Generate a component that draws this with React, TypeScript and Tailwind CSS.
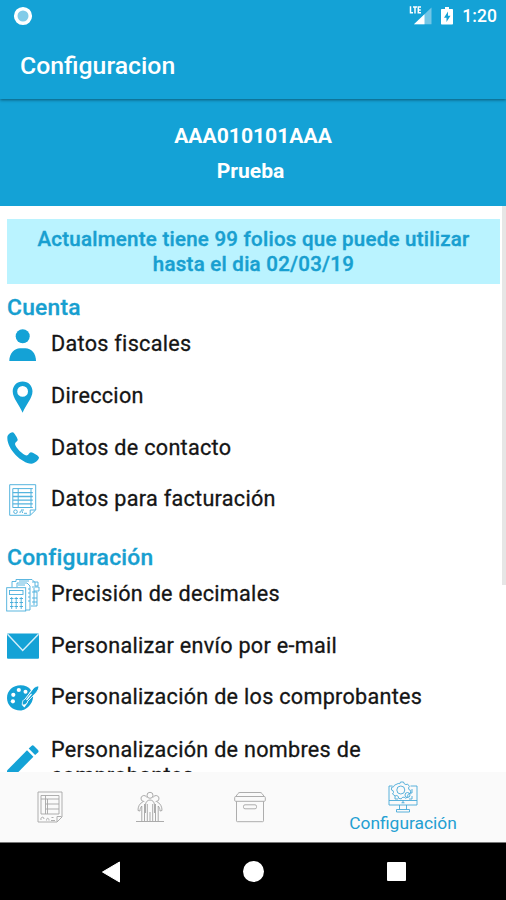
import type { ReactNode } from 'react';

const BLUE = '#14a2d6';

function UserIcon() {
  return (
    <svg viewBox="0 0 32 32" className="h-8 w-8" fill={BLUE}>
      <circle cx="15.7" cy="7.2" r="7" />
      <path d="M2.3 32C2.3 24 7.5 19.2 13 19.2h5.4c5.800 0 10.600 4.800 10.600 12.800z" />
    </svg>
  );
}

function PinIcon() {
  return (
    <svg viewBox="0 0 32 32" className="h-8 w-8" fill={BLUE}>
      <path
        fillRule="evenodd"
        d="M15.600 0.500C9.900 0.500 5.700 4.700 5.700 10.300c0 7 7 14 9.900 21.500 2.900-7.500 9.900-14.500 9.900-21.500 0-5.600-4.200-9.800-9.900-9.800zm0 4.500a5.400 5.400 0 1 1 0 10.800 5.400 5.400 0 0 1 0-10.800z"
      />
    </svg>
  );
}

function PhoneIcon() {
  return (
    <svg viewBox="0 0 32 32" className="h-8 w-8" fill={BLUE}>
      <path d="M0.500 4C1.500 1.800 4 0.300 6 0.200c1.400 0.500 4.600 6 4.700 7.600 0 1.800-2.700 2.400-2.700 4.200 0.500 3.500 8 11 11.500 11.500 2.100 0 2.700-3.200 4.500-3.200 1.600 0 7.600 3.400 8 5.100 0.200 2-4 6-7.700 6.300C14 31.500-1.500 15.500 0.500 4z" />
    </svg>
  );
}

function InvoiceIcon() {
  return (
    <svg viewBox="0 0 32 32" className="h-8 w-8" fill="none" stroke="#55b4de" strokeWidth="1">
      <path d="M2.700 0.700h26v25.300l-5.500 5.300H2.700z" />
      <path d="M23.200 31v-5h5.200M5.800 4.600h20M5.800 23.500h20M5.800 4.600v19M11.200 4.600v19M24 4.600v19" />
      <path d="M5.800 8.700h20M5.800 12.500h20M5.800 16.200h20M5.800 19.900h20" strokeWidth="1.300" />
      <circle cx="8.500" cy="27.700" r="1.800" />
      <path d="M13 29c0-3 2.500-3 2.500 0M17 29.300h3M14 26h3" />
    </svg>
  );
}

function InvoiceTabIcon() {
  return (
    <svg viewBox="0 0 26 32" className="h-8 w-[26px]" fill="none" stroke="#a6a6a6" strokeWidth="0.9">
      <path d="M1 1h24v25l-5 5H1z" />
      <path d="M20 30.500v-5h4.500M4 4.500h18V23H4zM8.500 4.500V23M10.500 8v15" />
      <path d="M4 8h18M8.500 13h13.500M8.500 18h13.500" />
      <path d="M4 29c-1-3 3-4 3-1M9.500 29.500c0-3 2.500-3 2.500 0M14 29.500h4M14.500 26.500h2" />
    </svg>
  );
}

function CalculatorIcon() {
  return (
    <svg viewBox="0 0 34 34" className="-mr-px -ml-px h-[34px] w-[34px] max-w-none" fill="none" stroke="#4aafdc" strokeWidth="0.9">
      <path d="M6 9V3.500h4V1.500h16l3 3V8M11 9V5h10l3 3v24h-4M13 3h10M12 7h7M26 4h6v4h-3M26 9h7v4h-5M26 14h5v14h-6M26 20h5M26 24h5" />
      <rect x="0.700" y="9.700" width="19" height="23.300" />
      <rect x="3.500" y="12.500" width="13.500" height="4" />
      <path d="M4 20.500h3.500M8.500 20.500h3.500M13.500 20.500h3.500M4 24.500h3.500M8.500 24.500h3.500M13.500 24.500h3.500M4 28.500h3.500M8.500 28.500h3.500M13.500 28.500h3.500" strokeWidth="1.200" />
      <path d="M5.700 19v12M10.200 19v12M15.200 19v12M22 11h2M22 15h2M22 19h2M22 23h2M28 10v17" />
    </svg>
  );
}

function MailIcon() {
  return (
    <svg viewBox="0 0 32 32" className="h-8 w-8">
      <rect x="0" y="3.500" width="32" height="25.300" rx="1" fill={BLUE} />
      <path d="M0.500 4.300l15.200 16.200L31.500 4.300" fill="none" stroke="#d5effa" strokeWidth="1.500" />
    </svg>
  );
}

function PaletteIcon() {
  return (
    <svg viewBox="0 0 32 32" className="h-8 w-8">
      <path
        d="M13.500 3.300c4.500 0 8.500 1.700 10.500 5l-8 12c-1 2-0.500 4 1.500 5.500 0.500 1.500-1.500 2.800-4 2.800C5.500 28.600 0 23 0 16 0 8.500 6 3.300 13.500 3.300z"
        fill={BLUE}
      />
      <path d="M22 17l4-4.500c1 7.500-4.500 13.500-9.500 15.500-1-2 3.500-4 5.500-11z" fill={BLUE} />
      <g fill="#fff">
        <circle cx="11.800" cy="8" r="2.100" />
        <circle cx="18.500" cy="9.800" r="2" />
        <circle cx="6.300" cy="12.800" r="2.100" />
        <circle cx="5.900" cy="19.300" r="2.100" />
      </g>
      <path d="M31.800 4.200c-1.600-0.600-3.800 0.500-5.500 2.200l-8.500 11c-1.700 0.300-2.600 1.800-2.500 5.800 3.500-0.300 5.200-1.700 5.200-3.700l8.500-8.700c1.800-2.200 3-4.600 2.800-6.600z" fill={BLUE} stroke="#fff" strokeWidth="0.900" />
      <path d="M19.500 18l5-6.200" stroke="#fff" strokeWidth="1.200" />
    </svg>
  );
}

function PencilIcon() {
  return (
    <svg viewBox="0 0 32 32" className="h-8 w-8" fill={BLUE}>
      <path d="M0 25.500L20 5.300l6.400 6.400L6.500 32H0z" />
      <path d="M21.700 3.600l2.700-2.700c0.800-0.800 1.800-0.800 2.600 0l4 4c0.800 0.800 0.800 1.800 0 2.600l-2.900 2.600z" />
    </svg>
  );
}

function PeopleIcon() {
  return (
    <svg viewBox="0 0 32 32" className="h-8 w-8" fill="none" stroke="#a2a2a2" strokeWidth="0.9">
      <path d="M2 30.500h28" />
      <circle cx="16" cy="4.300" r="3" />
      <path d="M12.800 6.500a3 3 0 1 0-2.500 4M19.200 6.500a3 3 0 1 1 2.500 4" />
      <path d="M11.500 22v-8c0-3 2-5 4.500-5s4.500 2 4.500 5v8M13.300 13v17M18.700 13v17M16 21v9" />
      <path d="M8.800 11c-3 1-5 5-4.800 8.500l2 0.500c0-2 0.500-3.500 1.800-5v15.200M10.500 13v17M23.200 11c3 1 5 5 4.800 8.500l-2 0.500c0-2-0.500-3.500-1.800-5v15.200M21.500 13v17" />
    </svg>
  );
}

function BoxIcon() {
  return (
    <svg viewBox="0 0 32 32" className="h-8 w-8" fill="none" stroke="#adadad" strokeWidth="1">
      <path d="M1.800 5.500L4 2.500c0.500-0.700 1-1 2-1h20c1 0 1.500 0.300 2 1l2.200 3" />
      <rect x="0.700" y="5.500" width="30.600" height="4.800" rx="1" />
      <path d="M2.500 10.300v19.500c0 0.600 0.300 0.900 0.900 0.900h25.200c0.600 0 0.900-0.300 0.900-0.900V10.300" />
      <rect x="9.500" y="13.800" width="13" height="4" rx="1.500" />
    </svg>
  );
}

function MonitorIcon() {
  return (
    <svg viewBox="0 0 30 32" className="h-8 w-[30px]" fill="none" stroke="#47a9d8" strokeWidth="0.9">
      <path d="M4.500 5H1v19h28V5h-6.500M1 19.500h28M11.500 24v4.500M18.500 24v4.500M8.500 28.500h13V31h-13z" />
      <path d="M10.200 2.500l1.600 0.200L12.500 1h3l0.700 1.700 1.700 0.900 1.700-0.500 1.800 2.200-0.900 1.700 0.600 1.800 1.700 0.700-0.300 2.700-1.800 0.500-1 1.500 0.200 1.800-2.400 1.200-1.400-1.100-1.900 0.400-1 1.400-2.600-0.600-0.300-1.800-1.500-1-1.700 0.400L4.500 13l1-1.500-0.400-1.800-1.700-0.800 0.300-2.600 1.800-0.500 1-1.600z" />
      <circle cx="12.800" cy="9" r="4" />
      <circle cx="19.500" cy="14" r="2.500" />
      <path d="M13.500 21.800h3M15 19v3M24 8v4h-2M24 15v3h-3M7 15v3h3" />
    </svg>
  );
}

function Section({ title, children, className }: { title: string; children: ReactNode; className: string }) {
  return (
    <section className={className}>
      <h2 className="h-[24px] text-[22.8px] leading-[26px] font-medium tracking-[0.25px] text-[#189fd0] [-webkit-text-stroke:0.3px_#189fd0]">
        {title}
      </h2>
      {children}
    </section>
  );
}

function Row({ icon, label, tall = false }: { icon: ReactNode; label: string; tall?: boolean }) {
  return (
    <div className={tall ? 'flex h-[74px] items-center' : 'flex h-[51.7px] items-center'}>
      <div className="flex w-11 shrink-0">{icon}</div>
      <span
        className={`w-[400px] text-[21.6px] tracking-[0.29px] text-[#151515] [-webkit-text-stroke:0.3px_#151515] ${
          tall ? 'mt-1 leading-[26px]' : '-mt-[2.4px] leading-[25px]'
        }`}
      >
        {label}
      </span>
    </div>
  );
}

export default function App() {
  return (
    <div className="flex h-[900px] w-[506px] flex-col overflow-hidden bg-white font-[Roboto,sans-serif]">
      {/* Status bar */}
      <div className="z-20 flex h-8 shrink-0 items-center justify-between bg-[#14a2d6] pr-[9px] pl-[13px]">
        <svg viewBox="0 0 20 20" className="h-5 w-5">
          <circle cx="10" cy="10" r="7.300" fill="#82cbe8" stroke="#fff" strokeWidth="3.600" />
        </svg>
        <div className="flex items-center">
          <svg viewBox="0 0 24 20" className="mr-[9px] h-5 w-6">
            <path d="M23.500 1.500v16.700H6z" fill="#73c6e6" />
            <path d="M16.500 8.200v10H6z" fill="#fff" />
            <path d="M2.500 0.300v6.500h2.500M5 1h4M7 1v6.500M13 1H10.300v5.800H13M10.300 4h2.500" fill="none" stroke="#fff" strokeWidth="1.500" />
          </svg>
          <svg viewBox="0 0 12 20" className="mr-[9px] h-5 w-3">
            <path d="M4 1h4v2h3c0.600 0 1 0.400 1 1v13.500c0 0.600-0.400 1-1 1H1c-0.600 0-1-0.400-1-1V4c0-0.600 0.400-1 1-1h3z" fill="#fff" />
            <path d="M7 5.500L3 11.800h2.500V16l4-6.200H7z" fill="#14a2d6" />
          </svg>
          <span className="text-[17.5px] font-medium tracking-[0.1px] text-white">1:20</span>
        </div>
      </div>

      {/* Toolbar */}
      <header className="z-10 flex h-[67px] shrink-0 items-center bg-[#14a2d6] pl-5 shadow-[0_1px_3px_rgba(0,0,0,0.45)]">
        <h1 className="text-[24.8px] font-medium text-white">Configuracion</h1>
      </header>

      <div className="flex h-[107px] shrink-0 flex-col items-center bg-[#14a2d6] pt-[19px] text-[21.1px] leading-[35px] font-bold text-white">
        <p>AAA010101AAA</p>
        <p className="-ml-[5px]">Prueba</p>
      </div>

      <main className="relative h-[566px] shrink-0 overflow-hidden pt-[13px] pr-[6px] pl-[7px]">
        <p className="h-[65px] bg-[#baf3ff] px-5 pt-[8px] text-center text-[20.5px] leading-[25px] font-medium tracking-[0.25px] text-[#189fd0] [-webkit-text-stroke:0.4px_#189fd0]">
          Actualmente tiene 99 folios que puede utilizar hasta el dia 02/03/19
        </p>
        <Section title="Cuenta" className="pt-[11px]">
          <Row icon={<UserIcon />} label="Datos fiscales" />
          <Row icon={<PinIcon />} label="Direccion" />
          <Row icon={<PhoneIcon />} label="Datos de contacto" />
          <Row icon={<InvoiceIcon />} label="Datos para facturación" />
        </Section>
        <Section title="Configuración" className="pt-[19.2px]">
          <Row icon={<CalculatorIcon />} label="Precisión de decimales" />
          <Row icon={<MailIcon />} label="Personalizar envío por e-mail" />
          <Row icon={<PaletteIcon />} label="Personalización de los comprobantes" />
          <Row icon={<PencilIcon />} label="Personalización de nombres de comprobantes" tall />
        </Section>
        <div className="absolute top-0 right-0 h-[379px] w-[4px] bg-[#e6e6e6]" />
      </main>

      {/* Bottom tabs */}
      <nav className="flex h-[70px] shrink-0 items-center bg-[#fafafa]">
        <div className="flex w-[100px] justify-center">
          <InvoiceTabIcon />
        </div>
        <div className="flex w-[100px] justify-center">
          <PeopleIcon />
        </div>
        <div className="flex w-[100px] justify-center">
          <BoxIcon />
        </div>
        <div className="flex flex-1 flex-col items-center">
          <MonitorIcon />
          <span className="text-[17.4px] leading-[21px] text-[#239fd2]">Configuración</span>
        </div>
      </nav>

      {/* Android navigation */}
      <div className="flex h-[58px] shrink-0 items-center justify-between border-t border-[#777] bg-black pr-[100px] pl-[102px]">
        <svg viewBox="0 0 18 22" className="h-[22px] w-[18px]">
          <path d="M17.500 1v20L0.500 11z" fill="#fff" stroke="#fff" strokeLinejoin="round" />
        </svg>
        <div className="h-[21px] w-[21px] rounded-full bg-white" />
        <div className="h-[19px] w-[19px] rounded-[1px] bg-white" />
      </div>
    </div>
  );
}
